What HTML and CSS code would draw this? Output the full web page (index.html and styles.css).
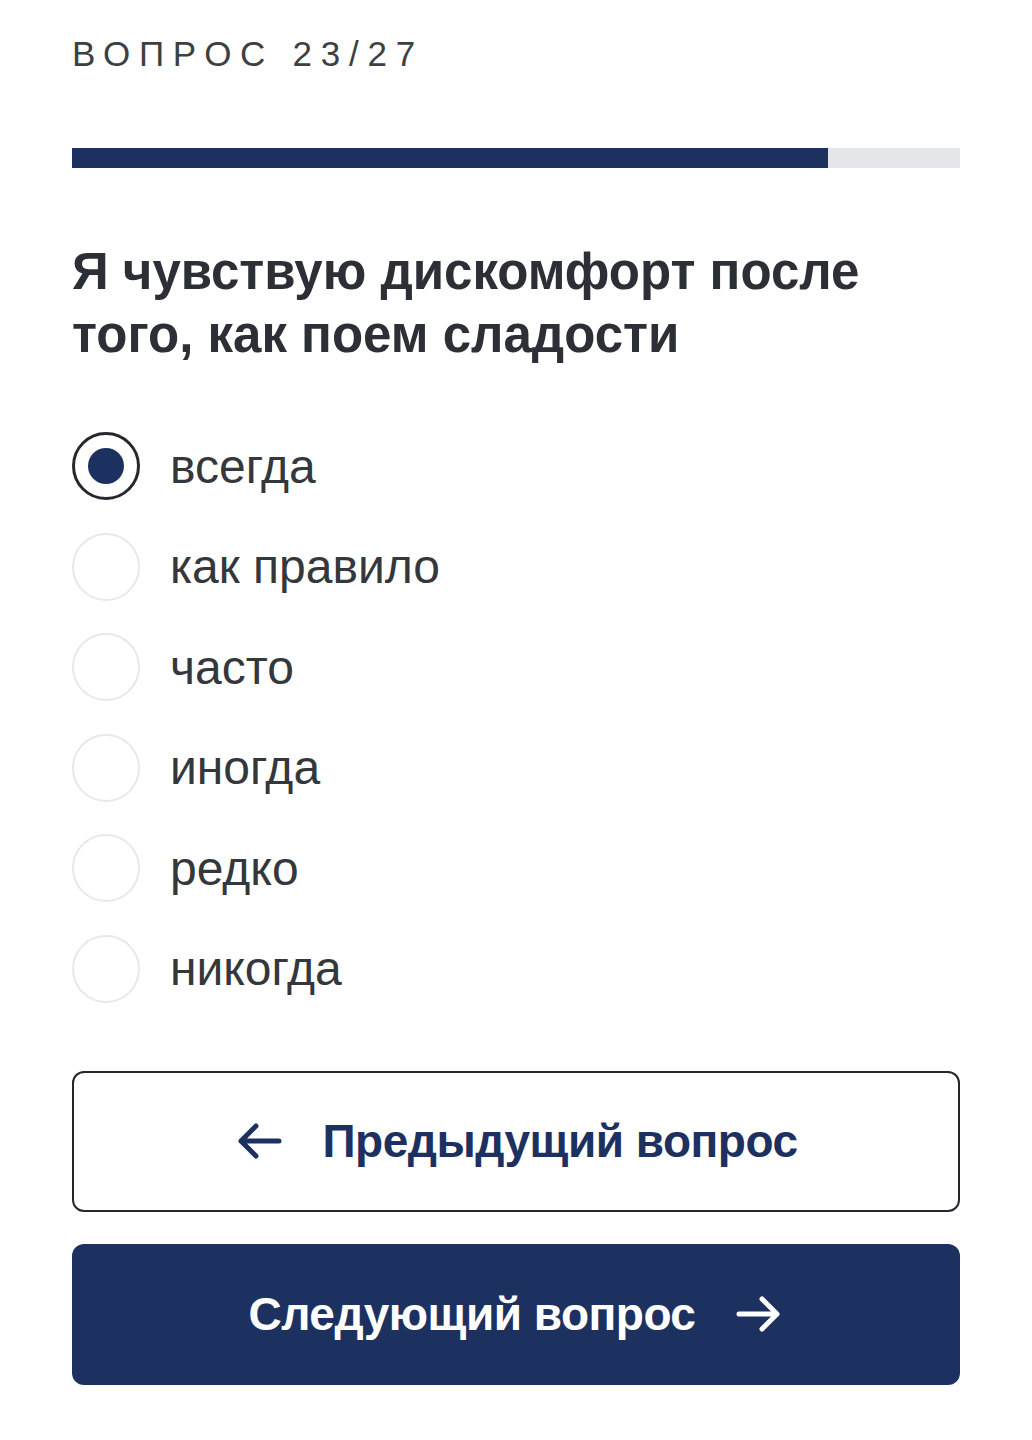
FILE: index.html
```html
<!DOCTYPE html>
<html lang="ru">
<head>
<meta charset="utf-8">
<title>Вопрос 23/27</title>
<link rel="stylesheet" href="styles.css">
</head>
<body>
<main class="quiz">
  <div class="counter">ВОПРОС 23/27</div>
  <div class="progress"><div class="progress-fill" style="width: 85.14%"></div></div>
  <h1 class="question">Я чувствую дискомфорт после того, как поем сладости</h1>
  <ul class="options">
    <li class="option selected"><span class="radio"></span><span class="label">всегда</span></li>
    <li class="option"><span class="radio"></span><span class="label">как правило</span></li>
    <li class="option"><span class="radio"></span><span class="label">часто</span></li>
    <li class="option"><span class="radio"></span><span class="label">иногда</span></li>
    <li class="option"><span class="radio"></span><span class="label">редко</span></li>
    <li class="option"><span class="radio"></span><span class="label">никогда</span></li>
  </ul>
  <div class="buttons">
    <button class="btn btn-prev">
      <svg class="arrow" viewBox="0 0 48 40" width="48" height="40"><path d="M44 20H6M21 5L6 20l15 15" fill="none" stroke="currentColor" stroke-width="5" stroke-linecap="round" stroke-linejoin="round"/></svg>
      <span>Предыдущий вопрос</span>
    </button>
    <button class="btn btn-next">
      <span>Следующий вопрос</span>
      <svg class="arrow" viewBox="0 0 48 40" width="48" height="40"><path d="M4 20h38M27 5l15 15-15 15" fill="none" stroke="currentColor" stroke-width="5" stroke-linecap="round" stroke-linejoin="round"/></svg>
    </button>
  </div>
</main>
</body>
</html>
```

FILE: styles.css
```css
* { box-sizing: border-box; }
html, body { margin: 0; padding: 0; background: #fff; }
body { font-family: "Liberation Sans", Arial, sans-serif; color: #2e3136; }

.quiz {
  width: 1032px;
  padding: 34px 72px 0 72px;
}

.counter {
  font-size: 35px;
  letter-spacing: 0.25em;
  color: #3d4043;
  line-height: 40px;
  height: 40px;
}

.progress {
  margin-top: 74px;
  height: 20px;
  background: #e4e6ea;
}
.progress-fill {
  height: 100%;
  background: #1d3160;
}

.question {
  margin: 72px 0 0 0;
  font-size: 51px;
  font-weight: 700;
  line-height: 63px;
  color: #2c2f35;
  letter-spacing: 0;
}

.options {
  list-style: none;
  margin: 66px 0 0 0;
  padding: 0;
  display: flex;
  flex-direction: column;
  gap: 32.5px;
}
.option {
  display: flex;
  align-items: center;
  gap: 30px;
  height: 68px;
}
.radio {
  flex: none;
  width: 68px;
  height: 68px;
  border-radius: 50%;
  border: 2px solid #e8e8e8;
  display: flex;
  align-items: center;
  justify-content: center;
}
.option.selected .radio {
  border: 3px solid #25282d;
}
.option.selected .radio::after {
  content: "";
  width: 36px;
  height: 36px;
  border-radius: 50%;
  background: #1d3160;
}
.label {
  font-size: 48px;
  color: #34373b;
}

.buttons {
  margin-top: 68px;
  display: flex;
  flex-direction: column;
  gap: 32px;
}
.btn {
  width: 888px;
  height: 141px;
  border-radius: 12px;
  font-family: "Liberation Sans", Arial, sans-serif;
  font-size: 46px;
  font-weight: 700;
  letter-spacing: -0.5px;
  display: flex;
  align-items: center;
  justify-content: center;
  gap: 40px;
  cursor: pointer;
  padding: 0;
}
.btn-prev {
  background: #fff;
  border: 2px solid #23272e;
  color: #1d3160;
}
.btn-next {
  background: #1d3160;
  border: none;
  color: #fff;
}
.arrow { display: block; flex: none; }
```
